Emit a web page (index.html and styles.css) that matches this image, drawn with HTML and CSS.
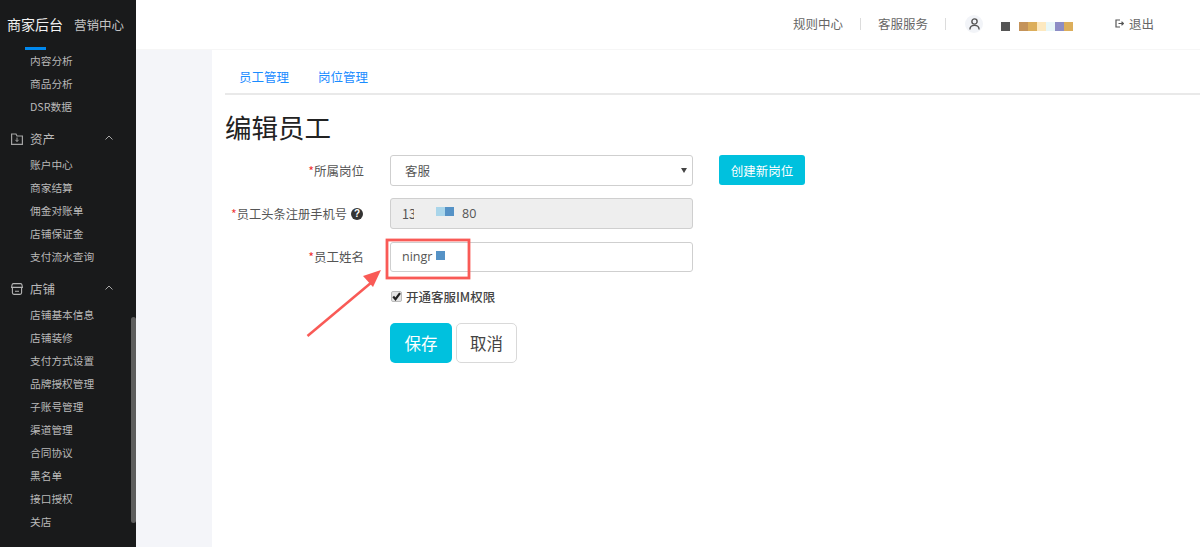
FILE: index.html
```html
<!DOCTYPE html>
<html lang="zh">
<head>
<meta charset="utf-8">
<title>编辑员工</title>
<link rel="stylesheet" href="styles.css">
</head>
<body>
<aside class="sidebar">
  <div class="brand">
    <span class="brand-main">商家后台</span>
    <span class="brand-sub">营销中心</span>
    <span class="brand-bar"></span>
  </div>
  <nav class="nav">
    <a class="item">内容分析</a>
    <a class="item">商品分析</a>
    <a class="item">DSR数据</a>
    <div class="section">
      <svg class="sec-icon" viewBox="0 0 12 12" width="12" height="12"><path d="M.6 2v9.400h10.800V3H6L5 1H.6z" fill="none" stroke="#a3a3a3" stroke-width="1.200"/><path d="M6 4.500v4M4.400 6.800 6 8.500l1.600-1.700" fill="none" stroke="#a3a3a3"/></svg>
      <span class="sec-title">资产</span>
      <svg class="chev" viewBox="0 0 8 5" width="8" height="5"><path d="M.5 4.500 4 1l3.500 3.500" fill="none" stroke="#a9a9a9"/></svg>
    </div>
    <a class="item">账户中心</a>
    <a class="item">商家结算</a>
    <a class="item">佣金对账单</a>
    <a class="item">店铺保证金</a>
    <a class="item">支付流水查询</a>
    <div class="section">
      <svg class="sec-icon" viewBox="0 0 12 12" width="12" height="12"><path d="M2.500.6h7a1.500 1.500 0 0 1 1.500 1.400l.4 2.400H.6L1 2A1.500 1.500 0 0 1 2.500.6zM1.400 4.400v5.400a1.600 1.600 0 0 0 1.600 1.600h6a1.600 1.600 0 0 0 1.600-1.600V4.400M4 8.300h4" fill="none" stroke="#b5b5b5" stroke-width="1.100"/></svg>
      <span class="sec-title">店铺</span>
      <svg class="chev" viewBox="0 0 8 5" width="8" height="5"><path d="M.5 4.500 4 1l3.500 3.500" fill="none" stroke="#a9a9a9"/></svg>
    </div>
    <a class="item">店铺基本信息</a>
    <a class="item">店铺装修</a>
    <a class="item">支付方式设置</a>
    <a class="item">品牌授权管理</a>
    <a class="item">子账号管理</a>
    <a class="item">渠道管理</a>
    <a class="item">合同协议</a>
    <a class="item">黑名单</a>
    <a class="item">接口授权</a>
    <a class="item">关店</a>
  </nav>
  <span class="scroll-thumb"></span>
</aside>

<div class="main">
  <header class="topbar">
    <a class="top-link">规则中心</a>
    <span class="top-sep"></span>
    <a class="top-link">客服服务</a>
    <span class="top-sep"></span>
    <span class="avatar">
      <svg viewBox="0 0 10 11" width="11" height="12"><circle cx="5" cy="3.200" r="2.400" fill="none" stroke="#555" stroke-width="1.300"/><path d="M.8 10.500c0-5 8.400-5 8.400 0" fill="none" stroke="#555" stroke-width="1.300"/></svg>
    </span>
    <span class="name-mask">
      <i class="sw sw-a"></i>
      <span class="sw-group">
        <i class="sw sw-b"></i><i class="sw sw-c"></i><i class="sw sw-d"></i><i class="sw sw-e"></i><i class="sw sw-f"></i><i class="sw sw-c"></i>
      </span>
    </span>
    <a class="logout">
      <svg viewBox="0 0 9 9" width="9" height="9"><path d="M5 1H1v7h4M3.500 4.500H8.500M6.500 2.800 8.500 4.500 6.500 6.200" fill="none" stroke="#555" stroke-width="1.200"/></svg>
      <span>退出</span>
    </a>
  </header>

  <div class="body">
    <div class="gutter"></div>
    <main class="content">
      <div class="tabs">
        <a class="tab">员工管理</a>
        <a class="tab">岗位管理</a>
      </div>
      <h1 class="title">编辑员工</h1>

      <div class="row row-a">
        <label class="label"><em>*</em>所属岗位</label>
        <div class="select-wrap">
          <select class="control"><option>客服</option></select>
        </div>
        <button class="btn-new" type="button">创建新岗位</button>
      </div>

      <div class="row row-b">
        <label class="label"><em>*</em>员工头条注册手机号<span class="help">?</span></label>
        <div class="control disabled">
          <span class="lead">13</span>
          <i class="cover"></i>
          <i class="mask mask-l"></i><i class="mask mask-d"></i>
          <span class="tail">80</span>
        </div>
      </div>

      <div class="row row-c">
        <label class="label"><em>*</em>员工姓名</label>
        <div class="control">
          <span class="name-text">ningr</span>
          <i class="mask mask-d mask-name"></i>
        </div>
      </div>

      <div class="row-check">
        <span class="check">
          <svg viewBox="0 0 11 11" width="11" height="11"><path d="M2.200 5.500 4.500 8.200 9 2.200" fill="none" stroke="#222" stroke-width="2.200"/></svg>
        </span>
        <span class="check-label">开通客服IM权限</span>
      </div>

      <div class="actions">
        <button class="btn btn-save" type="button">保存</button>
        <button class="btn btn-cancel" type="button">取消</button>
      </div>
    </main>
  </div>
</div>

<svg class="annotation" width="1200" height="547" viewBox="0 0 1200 547">
  <rect x="387" y="240" width="82" height="38" fill="none" stroke="#f95a56" stroke-width="2.800"/>
  <path d="M307.500 336 372 282" fill="none" stroke="#f95a56" stroke-width="2.500"/>
  <path d="M381 270 363 276 373 287z" fill="#f95a56"/>
</svg>
</body>
</html>
```
FILE: styles.css
```css
* { box-sizing: border-box; }
html, body { margin: 0; height: 100%; }
body {
  display: flex;
  height: 547px;
  overflow: hidden;
  background: #fff;
  font-family: "Noto Sans CJK SC", "Liberation Sans", sans-serif;
  color: #555;
}

/* sidebar */
.sidebar {
  position: relative;
  flex: 0 0 136px;
  background: #191a1b;
  overflow: hidden;
}
.brand {
  position: relative;
  height: 48.500px;
  display: flex;
  align-items: center;
  padding: 0 0 0 7px;
}
.brand-main { color: #f2f2f2; font-size: 14px; width: 67px; white-space: nowrap; }
.brand-sub { color: #c4c4c4; font-size: 12.500px; white-space: nowrap; }
.brand-bar {
  position: absolute;
  left: 25px;
  top: 47px;
  width: 21px;
  height: 3px;
  background: #0088ee;
}
.nav { display: flex; flex-direction: column; }
.item {
  height: 23px;
  line-height: 23px;
  padding-left: 30px;
  font-size: 10.700px;
  color: #b9b9b9;
  white-space: nowrap;
}
.section {
  height: 23px;
  margin: 9.500px 0 2.500px;
  padding: 0 23px 0 11px;
  display: flex;
  align-items: center;
  color: #b9b9b9;
}
.sec-icon { flex: none; }
.sec-title { margin-left: 7px; font-size: 12.500px; flex: 1; white-space: nowrap; }
.chev { flex: none; margin-bottom: 3px; }
.scroll-thumb {
  position: absolute;
  left: 131px;
  top: 317px;
  width: 5px;
  height: 206px;
  border-radius: 3px;
  background: #5e5e5e;
}

/* main */
.main { flex: 1; display: flex; flex-direction: column; min-width: 0; }
.topbar {
  flex: 0 0 50px;
  display: flex;
  align-items: center;
  padding: 0 0 2px 657px;
  border-bottom: 1px solid #f6f6f6;
  background: #fff;
}
.top-link { font-size: 12.500px; color: #666; white-space: nowrap; }
.top-sep { width: 1px; height: 12px; background: #dcdcdc; margin: 0 17px; }
.avatar {
  width: 18px;
  height: 18px;
  margin-left: 2px;
  border-radius: 50%;
  background: #f2f4f8;
  display: flex;
  align-items: center;
  justify-content: center;
}
.name-mask { display: flex; margin-left: 18px; margin-top: 5px; }
.sw { display: block; width: 9px; height: 9px; }
.sw-group { display: flex; margin-left: 9px; }
.sw-a { background: #555; }
.sw-b { background: #c4935a; }
.sw-c { background: #dcae5b; }
.sw-d { background: #fde9c0; }
.sw-e { background: #e8f7f8; }
.sw-f { background: #8d8dc5; }
.logout {
  display: flex;
  align-items: center;
  gap: 5px;
  margin-left: 42px;
  font-size: 12.500px;
  color: #666;
}

.body { flex: 1; display: flex; min-height: 0; }
.gutter { flex: 0 0 76px; background: #f4f5f9; }
.content { flex: 1; padding-left: 13px; min-width: 0; }

.tabs {
  height: 45px;
  display: flex;
  align-items: center;
  gap: 29px;
  padding: 9px 0 0 14px;
  border-bottom: 2px solid #e9e9e9;
}
.tab { font-size: 12.500px; color: #1a8cff; white-space: nowrap; }
.title {
  margin: 13px 0 9px;
  height: 38px;
  font-size: 26.500px;
  line-height: 38px;
  font-weight: 400;
  color: #222;
  white-space: nowrap;
}

/* form */
.row { display: flex; align-items: center; height: 31px; }
.row-b { margin-top: 12px; }
.row-c { margin-top: 12px; }
.label {
  flex: 0 0 139px;
  display: flex;
  justify-content: flex-end;
  align-items: center;
  margin-right: 26px;
  font-size: 12.500px;
  color: #555;
  white-space: nowrap;
}
.row-b .label { font-size: 12.250px; }
.label em { color: #ee3333; font-style: normal; }
.help {
  flex: none;
  width: 12px;
  height: 12px;
  margin-left: 4px;
  margin-right: 1px;
  border-radius: 50%;
  background: #333;
  color: #fff;
  font: 700 10px/12px "Liberation Sans", sans-serif;
  text-align: center;
}
.select-wrap { position: relative; width: 303px; }
.select-wrap::after {
  content: "";
  position: absolute;
  right: 6px;
  top: 13px;
  border-left: 3px solid transparent;
  border-right: 3px solid transparent;
  border-top: 5px solid #444;
}
.control {
  width: 303px;
  height: 31px;
  padding: 0 11px;
  display: flex;
  align-items: center;
  border: 1px solid #cfcfcf;
  border-radius: 3px;
  background: #fff;
  color: #555;
  font-family: "Noto Sans CJK SC", "Liberation Sans", sans-serif;
  font-size: 12.500px;
}
select.control { appearance: none; outline: 0; padding-left: 14px; }
.row-c .control { height: 30px; }
.disabled { background: #eee; }
.lead { width: 12px; white-space: nowrap; }
.cover { display: block; flex: none; width: 4px; height: 16px; background: #eee; margin-right: -4px; }
.mask { display: block; width: 9px; height: 9px; margin-top: -5px; }
.mask-l { background: #a9d5ea; margin-left: 22px; }
.mask-d { background: #5592c6; }
.name-text { font-family: "Open Sans", "Liberation Sans", sans-serif; }
.mask-name { margin-left: 4px; margin-top: -3px; }
.tail { margin-left: 8px; font-family: "Open Sans", "Liberation Sans", sans-serif; }

.btn-new {
  width: 86px;
  height: 30px;
  margin: -1px 0 0 26px;
  padding: 0;
  border: 0;
  border-radius: 3px;
  background: #00c1de;
  color: #fff;
  font-family: inherit;
  font-size: 12.500px;
}

.row-check {
  display: flex;
  align-items: center;
  margin: 12px 0 0 165px;
  height: 24px;
}
.check {
  width: 11px;
  height: 11px;
  margin: 0 4px 0 1px;
  border: 1px solid #bbb;
  border-radius: 2px;
  background: #e4e4e4;
  display: flex;
  align-items: center;
  justify-content: center;
}
.check svg { flex: none; }
.check-label { font-size: 12.500px; font-weight: 500; color: #444; white-space: nowrap; }

.actions { display: flex; gap: 4px; margin: 15px 0 0 165px; }
.btn {
  height: 40px;
  padding: 0;
  border-radius: 5px;
  font-family: inherit;
  font-size: 16.500px;
}
.btn-save { width: 62px; border: 0; background: #00c1de; color: #fff; }
.btn-cancel { width: 61px; border: 1px solid #d9d9d9; background: #fff; color: #444; }

.annotation { position: absolute; left: 0; top: 0; pointer-events: none; }
```
